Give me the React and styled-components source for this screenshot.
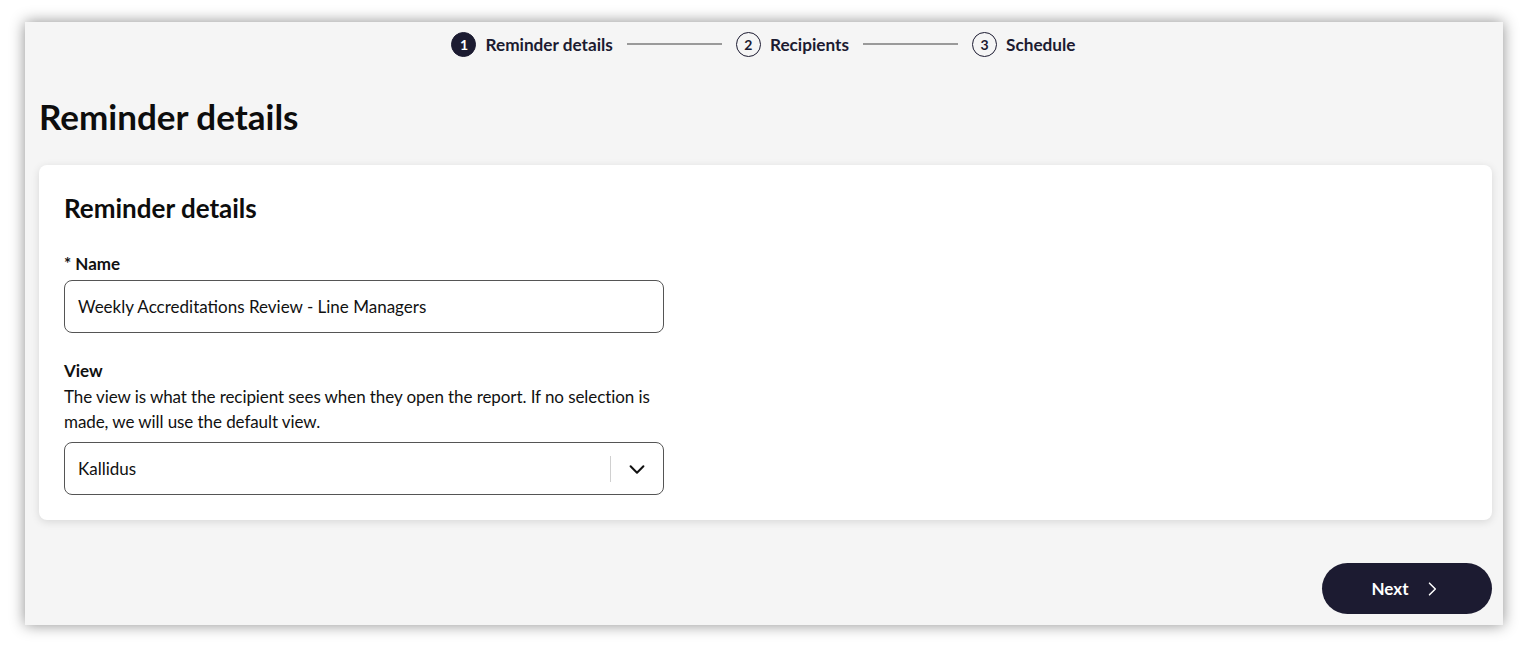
import React from "react";
import styled, { createGlobalStyle } from "styled-components";

const GlobalStyle = createGlobalStyle`
  body {
    margin: 0;
    background: #ffffff;
    font-family: Lato, "Open Sans", sans-serif;
    color: #111111;
  }
`;

const Page = styled.div`
  width: 1524px;
  height: 650px;
  padding: 22px 21px 25px 25px;
  box-sizing: border-box;
`;

const Window = styled.div`
  height: 603px;
  background: #f5f5f5;
  box-shadow: 0 0 14px rgba(0, 0, 0, 0.45);
  padding: 0 11px 0 14px;
  box-sizing: border-box;
  display: flex;
  flex-direction: column;
`;

const Stepper = styled.div`
  display: flex;
  align-items: center;
  justify-content: center;
  height: 44px;
  margin-left: -4px;
`;

const Step = styled.div`
  display: flex;
  align-items: center;
  gap: 9px;
  font-size: 17.2px;
  font-weight: 700;
  color: #1c1b31;
`;

const Circle = styled.span`
  width: 25px;
  height: 25px;
  border-radius: 50%;
  box-sizing: border-box;
  display: flex;
  align-items: center;
  justify-content: center;
  font-size: 14px;
  font-weight: 700;
  background: ${(p) => (p.$active ? "#1c1b31" : "transparent")};
  color: ${(p) => (p.$active ? "#ffffff" : "#1c1b31")};
  border: 1.5px solid #1c1b31;
`;

const Connector = styled.span`
  width: 95px;
  height: 2px;
  background: #9a9a9a;
  margin: 0 14px;
`;

const PageTitle = styled.h1`
  margin: 29px 0 0;
  font-size: 35px;
  line-height: 42px;
  font-weight: 700;
  color: #0d0d0d;
`;

const Card = styled.section`
  margin-top: 28px;
  background: #ffffff;
  border-radius: 8px;
  box-shadow: 0 2px 8px rgba(0, 0, 0, 0.12);
  padding: 27px 25px 25px;
  height: 355px;
  box-sizing: border-box;
`;

const CardTitle = styled.h2`
  margin: 0 0 28px;
  font-size: 26px;
  line-height: 32px;
  font-weight: 700;
  color: #0d0d0d;
`;

const Field = styled.div`
  width: 600px;
  margin-bottom: ${(p) => p.$gap || "0px"};
`;

const Label = styled.div`
  font-size: 17px;
  line-height: 24px;
  font-weight: 700;
  color: #111111;
  margin-bottom: ${(p) => p.$gap || "4px"};
`;

const Help = styled.p`
  margin: 0 0 8px;
  font-size: 17px;
  letter-spacing: -0.08px;
  line-height: 25px;
  color: #111111;
`;

const Box = styled.div`
  height: 53px;
  border: 1px solid #555555;
  border-radius: 8px;
  box-sizing: border-box;
  display: flex;
  align-items: center;
  padding-left: 13px;
  font-size: 17px;
  color: #111111;
  background: #ffffff;
`;

const Value = styled.span`
  flex: 1;
`;

const Divider = styled.span`
  width: 1px;
  height: 26px;
  background: #d0d0d0;
`;

const Caret = styled.span`
  width: 52px;
  display: flex;
  align-items: center;
  justify-content: center;
  color: #111111;
`;

const Footer = styled.div`
  display: flex;
  justify-content: flex-end;
  margin-top: 43px;
`;

const NextButton = styled.button`
  width: 170px;
  height: 51px;
  border: none;
  border-radius: 26px;
  background: #1c1b31;
  color: #ffffff;
  font-family: Lato, sans-serif;
  font-size: 17px;
  font-weight: 700;
  display: flex;
  align-items: center;
  justify-content: center;
  gap: 14px;
  padding-left: 6px;
`;

const Chevron = ({ dir = "down", size = 18, stroke = 2 }) => (
  <svg width={size} height={size} viewBox="0 0 24 24" fill="none" stroke="currentColor" strokeWidth={stroke} strokeLinecap="round" strokeLinejoin="round">
    {dir === "down" ? <path d="M5 9l7 7 7-7" /> : <path d="M9 5l7 7-7 7" />}
  </svg>
);

const steps = ["Reminder details", "Recipients", "Schedule"];

export default function App() {
  return (
    <>
      <GlobalStyle />
      <Page>
        <Window>
          <Stepper>
            {steps.map((s, i) => (
              <React.Fragment key={s}>
                {i > 0 && <Connector />}
                <Step>
                  <Circle $active={i === 0}>{i + 1}</Circle>
                  {s}
                </Step>
              </React.Fragment>
            ))}
          </Stepper>
          <PageTitle>Reminder details</PageTitle>
          <Card>
            <CardTitle>Reminder details</CardTitle>
            <Field $gap="26px">
              <Label>* Name</Label>
              <Box>
                <Value>Weekly Accreditations Review - Line Managers</Value>
              </Box>
            </Field>
            <Field>
              <Label $gap="1px">View</Label>
              <Help>
                The view is what the recipient sees when they open the report. If no selection is made, we will use the default view.
              </Help>
              <Box>
                <Value>Kallidus</Value>
                <Divider />
                <Caret>
                  <Chevron dir="down" size={22} stroke={2.2} />
                </Caret>
              </Box>
            </Field>
          </Card>
          <Footer>
            <NextButton>
              Next
              <Chevron dir="right" size={20} stroke={1.8} />
            </NextButton>
          </Footer>
        </Window>
      </Page>
    </>
  );
}
